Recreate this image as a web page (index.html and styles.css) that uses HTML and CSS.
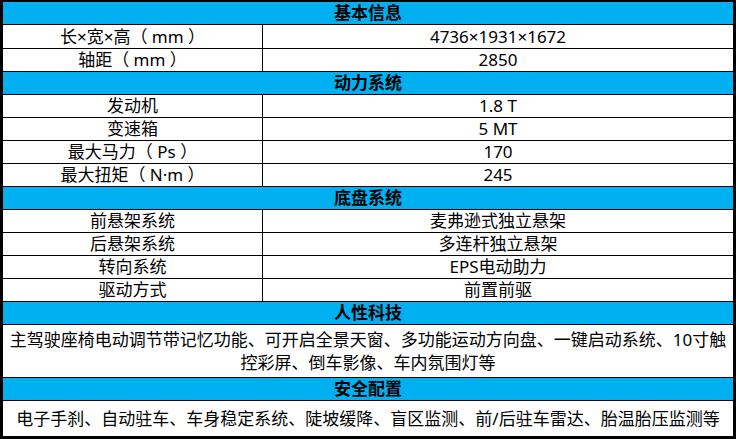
FILE: index.html
```html
<!DOCTYPE html>
<html lang="zh-CN">
<head>
<meta charset="utf-8">
<title>车型配置</title>
<link rel="stylesheet" href="styles.css">
</head>
<body>
<div class="sheet">
  <div class="row head h23">基本信息</div>
  <div class="row pair h24"><div class="key">长×宽×高（ mm ）</div><div class="val">4736×1931×1672</div></div>
  <div class="row pair h23"><div class="key">轴距（ mm ）</div><div class="val">2850</div></div>
  <div class="row head h23">动力系统</div>
  <div class="row pair h23"><div class="key">发动机</div><div class="val">1.8 T</div></div>
  <div class="row pair h23"><div class="key">变速箱</div><div class="val">5 MT</div></div>
  <div class="row pair h23"><div class="key">最大马力（ Ps ）</div><div class="val">170</div></div>
  <div class="row pair h23"><div class="key">最大扭矩（ N·m ）</div><div class="val">245</div></div>
  <div class="row head h23">底盘系统</div>
  <div class="row pair h23"><div class="key">前悬架系统</div><div class="val">麦弗逊式独立悬架</div></div>
  <div class="row pair h23"><div class="key">后悬架系统</div><div class="val">多连杆独立悬架</div></div>
  <div class="row pair h23"><div class="key">转向系统</div><div class="val">EPS电动助力</div></div>
  <div class="row pair h23"><div class="key">驱动方式</div><div class="val">前置前驱</div></div>
  <div class="row head h23">人性科技</div>
  <div class="row text tall">主驾驶座椅电动调节带记忆功能、可开启全景天窗、多功能运动方向盘、一键启动系统、10寸触<br>控彩屏、倒车影像、车内氛围灯等</div>
  <div class="row head h23">安全配置</div>
  <div class="row text last">电子手刹、自动驻车、车身稳定系统、陡坡缓降、盲区监测、前/后驻车雷达、胎温胎压监测等</div>
</div>
</body>
</html>
```

FILE: styles.css
```css
html, body {
  margin: 0;
  padding: 0;
  background: #ffffff;
}

.sheet {
  width: 736px;
  height: 439px;
  box-sizing: border-box;
  border: 3px solid #000;
  border-top-width: 2px;
  display: flex;
  flex-direction: column;
  font-family: "Noto Sans", "Noto Sans CJK SC", sans-serif;
  font-size: 17px;
  color: #000;
}

.row {
  box-sizing: border-box;
  border-bottom: 1px solid #000;
  flex: none;
}

.h23 { height: 23px; line-height: 22px; }
.h24 { height: 24px; line-height: 23px; }

.head {
  background: #00b0f0;
  font-weight: bold;
  text-align: center;
}

.pair {
  display: grid;
  grid-template-columns: 260px 1fr;
}

.key {
  border-right: 1px solid #000;
  text-align: center;
  white-space: nowrap;
}

.val {
  text-align: center;
  white-space: nowrap;
}

.text {
  display: flex;
  align-items: center;
  justify-content: center;
  text-align: center;
  white-space: nowrap;
}

.tall {
  height: 53px;
  line-height: 23px;
}

.last {
  height: 35px;
  border-bottom: none;
  line-height: 22px;
}
```
